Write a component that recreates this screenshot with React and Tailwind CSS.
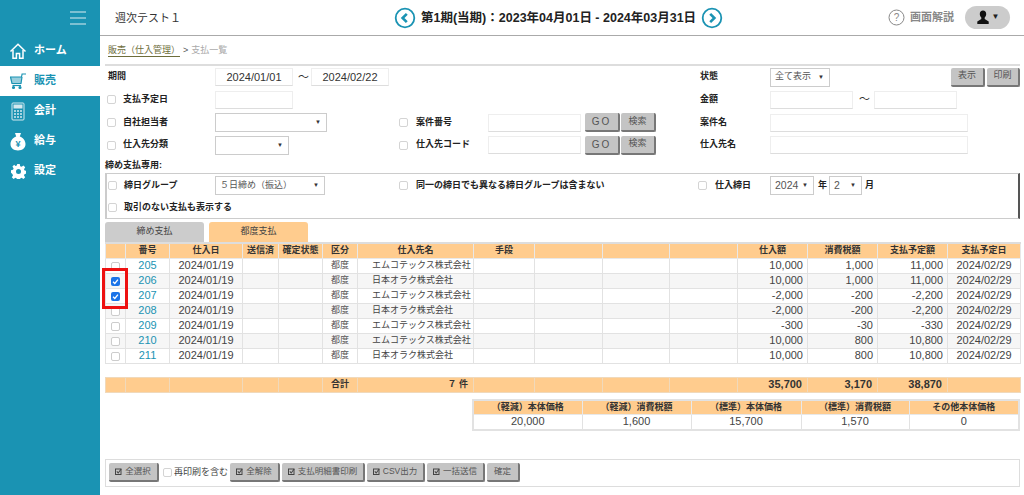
import React from "react";

const FONT = "[font-family:'Liberation_Sans','Noto_Sans_CJK_JP',sans-serif]";

function Nav({ icon, label, active }) {
  return (
    <div className={`flex items-center h-[30px] pl-[6px] ${active ? "bg-white text-[#1a93b3]" : "text-white"}`}>
      <div className="w-[24px] h-[24px] flex items-center justify-center">{icon}</div>
      <span className="ml-[4px] mb-[2px] text-[11px] font-bold">{label}</span>
    </div>
  );
}

const HomeI = () => (
  <svg width="18" height="18" viewBox="0 0 18 18" fill="none" stroke="#fff" strokeWidth="1.5">
    <path d="M1.5 9.5 9 2.2l7.5 7.3" />
    <path d="M4 8v8.2h3.4v-4.6h3.2v4.6H14V8" />
  </svg>
);
const CartI = () => (
  <svg width="18" height="18" viewBox="0 0 18 18" fill="none" stroke="#1a93b3" strokeWidth="1.2">
    <path d="M1 5h11.5l.6-3H17" />
    <path d="M1.5 5 3 11.5h9L13 5" fill="#1a93b3" fillOpacity=".45" />
    <path d="M3.5 13.5h8.5" />
    <circle cx="4.5" cy="15.5" r="1" fill="#1a93b3" />
    <circle cx="11" cy="15.5" r="1" fill="#1a93b3" />
  </svg>
);
const CalcI = () => (
  <svg width="14" height="19" viewBox="0 0 14 19" fill="none" stroke="#d3e9ef" strokeWidth="1">
    <rect x="1" y="1" width="12" height="17" rx="1" fill="#1a93b3" />
    <rect x="3" y="3" width="8" height="3" fill="#d3e9ef" />
    <path d="M3 9h8M3 12h8M3 15h8" strokeWidth="1.4" strokeDasharray="2 1" />
  </svg>
);
const BagI = () => (
  <svg width="16" height="19" viewBox="0 0 16 19">
    <path d="M5 1h6L9.8 4.5c3.4 1.2 5.7 4.3 5.7 7.6 0 4-3 6.4-7.5 6.4S.5 16.100.5 12.100c0-3.300 2.300-6.400 5.700-7.600z" fill="#fff" />
    <text x="8" y="15" textAnchor="middle" fontSize="9" fontWeight="700" fill="#1a93b3" fontFamily="Liberation Sans">¥</text>
  </svg>
);
const GearI = () => (
  <svg width="15" height="15" viewBox="0 0 24 24" fill="#fff">
    <path fillRule="evenodd" d="M10 0h4l.7 3.400 2.300 1 2.900-1.900 2.800 2.800-1.900 2.900 1 2.300 3.200.7v4l-3.200.7-1 2.300 1.900 2.900-2.800 2.800-2.900-1.900-2.300 1-.7 3.300h-4l-.7-3.300-2.300-1-2.900 1.900-2.800-2.800 1.900-2.900-1-2.300L0 14v-4l3.200-.7 1-2.300-1.900-2.900 2.800-2.800L7 3.200l2.300-.9zM12 8a4 4 0 1 0 0 8 4 4 0 0 0 0-8z" />
  </svg>
);

const Circle = ({ dir }) => (
  <svg width="22" height="22" viewBox="0 0 22 22" fill="none" stroke="#1a93b3">
    <circle cx="11" cy="11" r="9.300" strokeWidth="1.800" />
    <path d={dir === "l" ? "M12.800 6.800 8.600 11l4.200 4.200" : "M9.200 6.800 13.400 11l-4.200 4.200"} strokeWidth="2.600" />
  </svg>
);

const Box = ({ w, children, className = "" }) => (
  <div className={`h-[18px] bg-white border border-[#eeeeee] border-b-[#dddddd] text-[11px] text-[#333] flex items-center justify-center ${className}`} style={{ width: w }}>
    {children}
  </div>
);

const Sel = ({ w, label, latin }) => (
  <div className={`h-[19px] bg-white border border-[#cccccc] ${latin ? "text-[10.500px]" : "text-[9px]"} text-[#555] flex items-center justify-between pl-[4px] pr-[5px] whitespace-nowrap`} style={{ width: w }}>
    <span>{label}</span>
    <span className="text-[6px] text-[#333] shrink-0">▼</span>
  </div>
);

const Chk = ({ className = "" }) => <span className={`inline-block w-[9px] h-[9px] border border-[#d4d4d4] rounded-[2px] bg-white shrink-0 ${className}`} />;

const Btn = ({ children, className = "" }) => (
  <button className={`h-[19px] bg-[#c4c4c4] rounded-[2px] border-r-2 border-b-2 border-[#777777] text-[9px] text-[#555] flex items-center justify-center whitespace-nowrap ${className}`}>
    {children}
  </button>
);

const Mark = () => (
  <svg width="7" height="7" viewBox="0 0 7 7" fill="none" stroke="#444" className="mr-[3px] shrink-0">
    <rect x=".5" y="1" width="5.500" height="5.500" />
    <path d="M1.800 3.400 3.200 5 6.200 1" strokeWidth="1.100" />
  </svg>
);

const Lbl = ({ children, className = "" }) => <span className={`text-[9px] font-bold text-[#222] whitespace-nowrap ${className}`}>{children}</span>;

const COLS = [20, 44, 73, 36, 44, 35, 116, 61, 68, 67, 68, 70, 70, 70, 73];
const HEAD = ["", "番号", "仕入日", "送信済", "確定状態", "区分", "仕入先名", "手段", "", "", "", "仕入額", "消費税額", "支払予定額", "支払予定日"];
const ROWS = [
  ["205", "エムコテックス株式会社", "10,000", "1,000", "11,000", false],
  ["206", "日本オラク株式会社", "10,000", "1,000", "11,000", true],
  ["207", "エムコテックス株式会社", "-2,000", "-200", "-2,200", true],
  ["208", "日本オラク株式会社", "-2,000", "-200", "-2,200", false],
  ["209", "エムコテックス株式会社", "-300", "-30", "-330", false],
  ["210", "エムコテックス株式会社", "10,000", "800", "10,800", false],
  ["211", "日本オラク株式会社", "10,000", "800", "10,800", false],
];
const Colgroup = ({ cols }) => (
  <colgroup>
    {cols.map((w, i) => (
      <col key={i} style={{ width: w }} />
    ))}
  </colgroup>
);

const td = "border border-[#e2e2e2] p-0 h-[15px] leading-[13px] text-[#444] whitespace-nowrap overflow-hidden";
const th = "border border-[#e8e8e8] p-0 h-[15px] leading-[13px] bg-[#ffcc8e] text-[9px] font-bold text-[#333] text-center whitespace-nowrap";

export default function App() {
  return (
    <div className={`w-[1024px] h-[495px] flex overflow-hidden bg-white ${FONT}`}>
      <aside className="w-[100px] shrink-0 bg-[#1a93b3] flex flex-col">
        <div className="h-[36px] relative flex justify-end items-start pt-[11px] pr-[14px]">
          <div className="w-[16px] flex flex-col gap-[4px]">
            <div className="h-[2px] bg-[#7cc0d2]" />
            <div className="h-[2px] bg-[#7cc0d2]" />
            <div className="h-[2px] bg-[#7cc0d2]" />
          </div>
        </div>
        <Nav icon={<HomeI />} label="ホーム" />
        <Nav icon={<CartI />} label="販売" active />
        <Nav icon={<CalcI />} label="会計" />
        <Nav icon={<BagI />} label="給与" />
        <Nav icon={<GearI />} label="設定" />
      </aside>

      <main className="flex-1 min-w-0 flex flex-col">
        <header className="h-[36px] shrink-0 border-b border-[#aaaaaa] flex items-center relative pl-[15px] pb-[1px]">
          <span className="text-[11px] text-[#333] mt-[3px]">週次テスト１</span>
          <div className="absolute left-[294px] top-[7px] flex items-center gap-[5px]">
            <Circle dir="l" />
            <span className="text-[12.500px] font-bold text-[#222] whitespace-nowrap">第1期(当期)：2023年04月01日 - 2024年03月31日</span>
            <Circle dir="r" />
          </div>
          <div className="ml-auto flex items-center">
            <svg width="17" height="17" viewBox="0 0 17 17" fill="none">
              <circle cx="8.500" cy="8.500" r="7.500" stroke="#888" strokeWidth="1" />
              <text x="8.500" y="12" textAnchor="middle" fontSize="10" fill="#888" fontFamily="Liberation Sans">?</text>
            </svg>
            <span className="ml-[5px] text-[11px] font-bold text-[#888]">画面解説</span>
            <div className="ml-[11px] mr-[14px] w-[45px] h-[23px] rounded-full bg-[#cccccc] flex items-center justify-center gap-[2px]">
              <svg width="14" height="14" viewBox="0 0 14 14" fill="#111">
                <path d="M7 0.500c2 0 3.200 1.500 3.200 3.500 0 1.500-.6 2.700-1.500 3.400V9l4 2.500V14H1.300v-2.500l4-2.500V7.400C4.400 6.700 3.800 5.500 3.800 4c0-2 1.200-3.500 3.200-3.500z" />
              </svg>
              <span className="text-[8px] text-[#222]">▼</span>
            </div>
          </div>
        </header>

        <div className="h-[28px] shrink-0 flex items-center pl-[8px] pt-[1px]">
          <span className="text-[9px] text-[#6d6d3a] border-b border-[#6d6d3a] leading-[11px]">販売（仕入管理）</span>
          <span className="text-[9px] text-[#555] ml-[3px]">&gt;</span>
          <span className="text-[9px] text-[#aaaaaa] ml-[3px]">支払一覧</span>
        </div>

        <div className="ml-[5px] mr-[4px] border-t-2 border-[#dddddd] flex-1 flex flex-col">
          <div className="grid grid-cols-[293px_302px_1fr] grid-rows-[22px_23px_23px_22px] items-center">
            {/* row 1 */}
            <div className="flex items-center pl-[3px]">
              <Lbl className="w-[107px]">期間</Lbl>
              <Box w={78}>2024/01/01</Box>
              <span className="mx-[5px] text-[11px] text-[#333] w-[8px]">〜</span>
              <Box w={78}>2024/02/22</Box>
            </div>
            <div />
            <div className="flex items-center">
              <Lbl className="w-[70px]">状態</Lbl>
              <Sel w={60} label="全て表示" />
              <div className="ml-auto flex gap-[2px]">
                <Btn className="w-[34px]">表示</Btn>
                <Btn className="w-[33px]">印刷</Btn>
              </div>
            </div>
            {/* row 2 */}
            <div className="flex items-center pl-[2px]">
              <Chk />
              <Lbl className="ml-[7px] w-[92px]">支払予定日</Lbl>
              <Box w={78}></Box>
            </div>
            <div />
            <div className="flex items-center">
              <Lbl className="w-[70px]">金額</Lbl>
              <Box w={83}></Box>
              <span className="mx-[6px] text-[11px] text-[#333] w-[9px]">〜</span>
              <Box w={83}></Box>
            </div>
            {/* row 3 */}
            <div className="flex items-center pl-[2px]">
              <Chk />
              <Lbl className="ml-[7px] w-[92px]">自社担当者</Lbl>
              <Sel w={112} label="" />
            </div>
            <div className="flex items-center pl-[1px]">
              <Chk />
              <Lbl className="ml-[8px] w-[72px]">案件番号</Lbl>
              <Box w={93}></Box>
              <Btn className="ml-[4px] w-[35px] tracking-[2px] !text-[10px]">GO</Btn>
              <Btn className="ml-[1px] w-[35px]">検索</Btn>
            </div>
            <div className="flex items-center">
              <Lbl className="w-[70px]">案件名</Lbl>
              <Box w={198}></Box>
            </div>
            {/* row 4 */}
            <div className="flex items-center pl-[2px]">
              <Chk />
              <Lbl className="ml-[7px] w-[92px]">仕入先分類</Lbl>
              <Sel w={74} label="" />
            </div>
            <div className="flex items-center pl-[1px]">
              <Chk />
              <Lbl className="ml-[8px] w-[72px]">仕入先コード</Lbl>
              <Box w={93}></Box>
              <Btn className="ml-[4px] w-[35px] tracking-[2px] !text-[10px]">GO</Btn>
              <Btn className="ml-[1px] w-[35px]">検索</Btn>
            </div>
            <div className="flex items-center">
              <Lbl className="w-[70px]">仕入先名</Lbl>
              <Box w={198}></Box>
            </div>
          </div>

          <div className="mt-[4px] h-[12px] flex items-center">
            <Lbl>締め支払専用:</Lbl>
          </div>

          <div className="mt-[1px] h-[46px] border-x-2 border-y border-[#cccccc] border-r-[#555555] grid grid-cols-[291px_300px_1fr] grid-rows-[23px_21px] items-center">
            <div className="flex items-center pl-[1px]">
              <Chk />
              <Lbl className="ml-[7px] w-[91px]">締日グループ</Lbl>
              <Sel w={110} label="５日締め（振込）" />
            </div>
            <div className="flex items-center pl-[1px]">
              <Chk />
              <Lbl className="ml-[8px]">同一の締日でも異なる締日グループは含まない</Lbl>
            </div>
            <div className="flex items-center">
              <Chk />
              <Lbl className="ml-[8px] w-[55px]">仕入締日</Lbl>
              <Sel w={44} label="2024" latin />
              <Lbl className="ml-[4px] mr-[2px]">年</Lbl>
              <Sel w={33} label="2" latin />
              <Lbl className="ml-[3px]">月</Lbl>
            </div>
            <div className="col-span-3 flex items-center pl-[1px]">
              <Chk />
              <Lbl className="ml-[7px]">取引のない支払も表示する</Lbl>
            </div>
          </div>

          <div className="mt-[3px] h-[20px] flex items-end gap-[5px] text-[9px] text-[#444]">
            <div className="w-[99px] h-[20px] bg-[#cccccc] rounded-t-[3px] flex items-center justify-center pb-[1px]">締め支払</div>
            <div className="w-[99px] h-[20px] bg-[#ffcc8e] rounded-t-[3px] flex items-center justify-center pb-[1px]">都度支払</div>
          </div>

          <table className="table-fixed border-collapse w-[915px] border-t-2 border-t-[#dddddd]">
            <Colgroup cols={COLS} />
            <thead>
              <tr>
                {HEAD.map((h, i) => (
                  <th key={i} className={th}>{h}</th>
                ))}
              </tr>
            </thead>
            <tbody>
              {ROWS.map((r, idx) => (
                <tr key={r[0]} className={idx % 2 ? "bg-[#f6f6f6]" : "bg-white"}>
                  <td className={`${td} text-center`}>
                    {r[5] ? (
                      <span className="inline-flex w-[9px] h-[9px] rounded-[2px] bg-[#1a73e8] items-center justify-center align-middle">
                        <svg width="7" height="7" viewBox="0 0 8 8" fill="none" stroke="#fff" strokeWidth="1.500"><path d="M1.200 4.200 3.200 6.200 6.800 1.800" /></svg>
                      </span>
                    ) : (
                      <span className="inline-block w-[9px] h-[9px] border border-[#cccccc] rounded-[2px] bg-white align-middle" />
                    )}
                  </td>
                  <td className={`${td} text-[11px] text-center !text-[#1a93b3]`}>{r[0]}</td>
                  <td className={`${td} text-[11px] text-center`}>2024/01/19</td>
                  <td className={td} />
                  <td className={td} />
                  <td className={`${td} text-[9px] text-center !text-[#555]`}>都度</td>
                  <td className={`${td} text-[9px] pl-[14px]`}>{r[1]}</td>
                  <td className={td} />
                  <td className={td} />
                  <td className={td} />
                  <td className={td} />
                  <td className={`${td} text-[11px] text-right !pr-[4px]`}>{r[2]}</td>
                  <td className={`${td} text-[11px] text-right !pr-[4px]`}>{r[3]}</td>
                  <td className={`${td} text-[11px] text-right !pr-[4px]`}>{r[4]}</td>
                  <td className={`${td} text-[11px] text-center`}>2024/02/29</td>
                </tr>
              ))}
            </tbody>
          </table>

          <table className="mt-[13px] table-fixed border-collapse w-[915px]">
            <Colgroup cols={COLS} />
            <tbody>
              <tr className="bg-[#ffcc8e]">
                {COLS.map((_, i) => {
                  const vals = { 5: "合計", 6: "７ 件", 11: "35,700", 12: "3,170", 13: "38,870" };
                  const base = "border border-[#f0d9bb] p-0 h-[15px] leading-[11px] font-bold text-[#333]";
                  const size = i === 5 || i === 6 ? "text-[9px]" : "text-[11px]";
                  const align = i === 5 ? "text-center" : "text-right !pr-[5px]";
                  return <td key={i} className={`${base} ${size} ${align}`}>{vals[i] || ""}</td>;
                })}
              </tr>
            </tbody>
          </table>

          <div className="mt-[6px] flex justify-end">
            <table className="table-fixed border-collapse w-[546px] border-2 border-[#e2e2e2]">
              <Colgroup cols={[109, 109, 110, 108, 110]} />
              <tbody>
                <tr>
                  {["（軽減）本体価格", "（軽減）消費税額", "（標準）本体価格", "（標準）消費税額", "その他本体価格"].map((h) => (
                    <td key={h} className="border border-[#e8e8e8] p-0 h-[15px] leading-[13px] bg-[#ffcc8e] text-[9px] font-bold text-[#333] text-center whitespace-nowrap">{h}</td>
                  ))}
                </tr>
                <tr>
                  {["20,000", "1,600", "15,700", "1,570", "0"].map((v, i) => (
                    <td key={i} className="border border-[#e2e2e2] p-0 h-[15px] leading-[13px] text-[11px] text-[#444] text-center">{v}</td>
                  ))}
                </tr>
              </tbody>
            </table>
          </div>

          <div className="mt-[28px] h-[28px] shrink-0 border border-[#dddddd] flex items-center pl-[3px] gap-[2px]">
            <Btn className="w-[50px] !text-[8.500px]"><Mark />全選択</Btn>
            <Chk className="ml-[2px]" />
            <span className="w-[54px] text-[9px] text-[#444] whitespace-nowrap">再印刷を含む</span>
            <Btn className="w-[50px] !text-[8.500px]"><Mark />全解除</Btn>
            <Btn className="w-[83px] !text-[8.500px]"><Mark />支払明細書印刷</Btn>
            <Btn className="w-[58px] !text-[8.500px]"><Mark />CSV出力</Btn>
            <Btn className="w-[58px] !text-[8.500px]"><Mark />一括送信</Btn>
            <Btn className="w-[33px] !text-[8.500px]">確定</Btn>
          </div>
        </div>
      </main>

      <div className="absolute left-[102px] top-[268px] w-[26px] h-[41px] border-[3px] border-[#ee1111] pointer-events-none" />
    </div>
  );
}
